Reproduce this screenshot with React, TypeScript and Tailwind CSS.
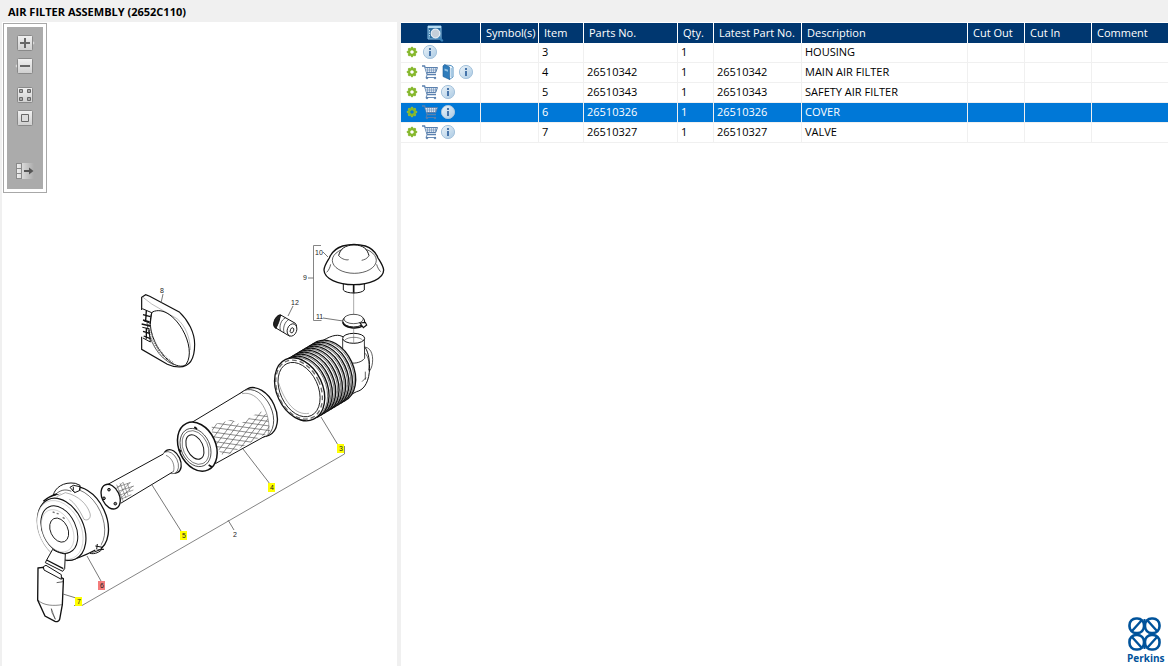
import { useState } from 'react';
import clsx from 'clsx';

interface Part {
  item: string;
  partNo: string;
  qty: string;
  latest: string;
  description: string;
  cart?: boolean;
  book?: boolean;
}

const PARTS: Part[] = [
  { item: '3', partNo: '', qty: '1', latest: '', description: 'HOUSING' },
  { item: '4', partNo: '26510342', qty: '1', latest: '26510342', description: 'MAIN AIR FILTER', cart: true, book: true },
  { item: '5', partNo: '26510343', qty: '1', latest: '26510343', description: 'SAFETY AIR FILTER', cart: true },
  { item: '6', partNo: '26510326', qty: '1', latest: '26510326', description: 'COVER', cart: true },
  { item: '7', partNo: '26510327', qty: '1', latest: '26510327', description: 'VALVE', cart: true },
];

const HOTSPOTS = [
  { item: '3', x: 337, y: 444 },
  { item: '4', x: 268, y: 483 },
  { item: '5', x: 180, y: 531 },
  { item: '6', x: 98, y: 581 },
  { item: '7', x: 75, y: 597 },
];

const LABELS = [
  { text: '2', x: 233, y: 537 },
  { text: '8', x: 160, y: 293 },
  { text: '9', x: 303, y: 280 },
  { text: '10', x: 315, y: 255 },
  { text: '11', x: 316, y: 319 },
  { text: '12', x: 291, y: 305 },
];

const RIBS = [9, 8, 7, 6, 5, 4, 3, 2, 1];
const TEETH = [0, 45, 90, 135, 180, 225, 270, 315];

/* ---------- Icons ---------- */

function GearIcon() {
  return (
    <svg width="12" height="12" viewBox="0 0 12 12" aria-hidden="true">
      <g fill="#8ebb3c">
        {TEETH.map((a) => (
          <rect key={a} x="4.8" y="0.8" width="2.4" height="3" rx="0.8" transform={`rotate(${a} 6 6)`} />
        ))}
      </g>
      <circle cx="6" cy="6" r="2.9" fill="none" stroke="#86b82c" strokeWidth="2.2" />
    </svg>
  );
}

function InfoIcon() {
  return (
    <svg width="16" height="16" viewBox="0 0 16 16" aria-hidden="true">
      <defs>
        <linearGradient id="infoFill" x1="0" y1="0" x2="1" y2="1">
          <stop offset="0" stopColor="#eef5fa" />
          <stop offset="1" stopColor="#a9c9e3" />
        </linearGradient>
      </defs>
      <circle cx="8" cy="8" r="6.6" fill="url(#infoFill)" stroke="#a5c3dc" />
      <path d="M7 4h2v2H7zM7 7h2v5H7z" fill="#4674aa" />
    </svg>
  );
}

function CartIcon() {
  return (
    <svg width="18" height="16" viewBox="0 0 18 16" fill="none" stroke="#5a80ae" aria-hidden="true">
      <path d="M1 2h2.6l2.600 8.500H15" strokeWidth="1.3" />
      <path d="M4.2 3.5h12.3l-1.8 5H5.6" fill="#dde6f0" />
      <path d="M6.5 3.5v5M8.5 3.5v5M10.5 3.5v5M12.5 3.5v5M14.5 3.5v5M5 6h10.5" strokeWidth="0.5" />
      <path d="M6 11l-1 2.500h10" strokeWidth="0.9" />
      <circle cx="6" cy="14" r="0.8" fill="#5a80ae" />
      <circle cx="14" cy="14" r="0.8" fill="#5a80ae" />
    </svg>
  );
}

function BookIcon() {
  return (
    <svg width="12" height="16" viewBox="0 0 12 16" aria-hidden="true">
      <path d="M3 1l6 .5 2 1.5v10l-3.500 2.500z" fill="#f2f8fc" stroke="#2f78b5" strokeWidth="0.8" />
      <path d="M1 2L2.5.5l5 2.5v12.500L1 12.500z" fill="#2f7cbb" stroke="#1c5d96" strokeWidth="0.6" />
      <path d="M2.5 4.5L6 5.8v2L2.5 6.5z" fill="#8fc0e4" />
      <path d="M9.2 4v9" stroke="#6aa5d2" strokeWidth="0.8" />
    </svg>
  );
}

function PreviewIcon() {
  return (
    <svg width="17" height="17" viewBox="0 0 17 17" aria-hidden="true">
      <path d="M1 1h13v13H1z" fill="#2c6d9f" stroke="#8fc4e6" />
      <path d="M1 1h13v2H1z" fill="#b5dbf2" />
      <path d="M2.5 5v8" stroke="#b5dbf2" strokeDasharray="1.5 1" />
      <path d="M11.5 12l3.500 3.500" stroke="#3d83b8" strokeWidth="2.4" strokeLinecap="round" />
      <circle cx="8.5" cy="8.5" r="4.3" fill="#c5cfd9" stroke="#e7eef5" strokeWidth="1.2" />
    </svg>
  );
}

type ToolKind = 'zoomIn' | 'zoomOut' | 'tiles' | 'fit' | 'export';

function ToolIcon({ kind }: { kind: ToolKind }) {
  return (
    <svg width="20" height="16" viewBox="0 0 20 16" aria-hidden="true">
      <defs>
        <linearGradient id="toolFill" x1="0" y1="0" x2="0" y2="1">
          <stop offset="0" stopColor="#f1f1f1" />
          <stop offset="1" stopColor="#cfcfcf" />
        </linearGradient>
        <linearGradient id="exportFill" x1="0" y1="0" x2="1" y2="0">
          <stop offset="0" stopColor="#f1f1f1" />
          <stop offset="1" stopColor="#ababab" />
        </linearGradient>
      </defs>
      {kind === 'zoomIn' && <path d="M17.5 5.5l2 2.5-2 2.5z" fill="#dedede" />}
      {kind === 'zoomOut' && <path d="M2.5 5.5L.5 8l2 2.5z" fill="#dedede" />}
      {kind !== 'export' && (
        <rect x="2.5" y="0.5" width="15" height="15" rx="1" fill="url(#toolFill)" stroke="#898989" />
      )}
      {kind === 'zoomIn' && <path d="M5 8h10M10 3v10" stroke="#686868" strokeWidth="2" />}
      {kind === 'zoomOut' && <path d="M5 8h10" stroke="#686868" strokeWidth="2" />}
      {kind === 'tiles' && (
        <path
          d="M4.5 2.5h3v3h-3zM12.5 2.5h3v3h-3zM4.5 10.5h3v3h-3zM12.5 10.5h3v3h-3z"
          fill="#aaaaaa"
          stroke="#686868"
        />
      )}
      {kind === 'fit' && <path d="M6.5 4.5h7v7h-7z" fill="#dcdcdc" stroke="#686868" />}
      {kind === 'export' && (
        <>
          <rect x="1" y="0" width="18" height="16" fill="url(#exportFill)" />
          <path d="M1.5 0v16M6.5 0v16M1 .5h5M1 5.5h5M1 10.5h5M1 15.5h5" stroke="#898989" />
          <path d="M9 8h6" stroke="#555555" strokeWidth="2" />
          <path d="M14 4.5L18.5 8 14 11.5z" fill="#555555" />
        </>
      )}
    </svg>
  );
}

function ToolButton({ kind, label }: { kind: ToolKind; label: string }) {
  return (
    <button type="button" aria-label={label} title={label} className="flex cursor-pointer justify-center">
      <ToolIcon kind={kind} />
    </button>
  );
}

function RowButton({ label, children }: { label: string; children: React.ReactNode }) {
  return (
    <button
      type="button"
      aria-label={label}
      title={label}
      className="flex h-[18px] w-[18px] cursor-pointer items-center justify-center"
    >
      {children}
    </button>
  );
}

function PerkinsLogo() {
  return (
    <svg width="40" height="50" viewBox="0 0 40 50" role="img" aria-label="Perkins">
      <g fill="none" stroke="#00539b" strokeWidth="2.6">
        <rect x="3.5" y="2.5" width="14.5" height="14.5" rx="6.5" />
        <rect x="19" y="2.5" width="14.5" height="14.5" rx="6.5" />
        <rect x="3.5" y="19" width="14.5" height="14.5" rx="6.5" />
        <rect x="19" y="19" width="14.5" height="14.5" rx="6.5" />
        <path d="M6 15L15.5 4.5M31 15L21.5 4.5M6 21L15.5 31.5M31 21L21.5 31.5" strokeWidth="2.4" />
        <path d="M18.5 3v5M18.5 28v5" strokeWidth="2" />
      </g>
      <text x="1" y="46" fill="#00539b" fontSize="10" fontWeight="700" fontFamily="Open Sans, sans-serif">
        Perkins
      </text>
    </svg>
  );
}

/* ---------- Exploded view ---------- */

function Housing() {
  return (
    <g transform="translate(260 235) scale(0.3333)" fill="white" stroke="#111111" strokeWidth="3">
      {/* Rear body and outlet */}
      <path d="M300 340c24-12 38 8 38 34s-12 44-24 40" strokeWidth="2" />
      <path d="M180 322c28-18 50-26 66-18l70 34c10 16 14 40 12 74-4 36-20 54-38 58l-40 20z" />
      <path d="M316 410v24M306 440l12-12M308 350c16 8 22 30 18 56" strokeWidth="2" fill="none" />
      <path d="M248 312v46c10 24 48 34 66 12l-1-58z" stroke="none" />
      <path d="M248 312v46l22 26c18 2 34-2 44-14l-1-58" strokeWidth="2.5" fill="none" />
      <ellipse cx="281" cy="310" rx="33" ry="15" />
      <path d="M254 316c10-12 46-12 54 0" strokeWidth="1.5" fill="none" />
      {/* Ribs, from the back to the front */}
      {RIBS.map((n) => (
        <g key={n}>
          <ellipse cx={122 + n * 10} cy={463 - n * 6} rx="69" ry="98" transform={`rotate(-25 ${122 + n * 10} ${463 - n * 6})`} strokeWidth="4" />
          <ellipse cx={118 + n * 10} cy={465 - n * 6} rx="69" ry="97" transform={`rotate(-25 ${118 + n * 10} ${465 - n * 6})`} strokeWidth="1.5" />
        </g>
      ))}
      <g transform="rotate(-25 119 463)">
        <ellipse cx="119" cy="463" rx="69" ry="99" strokeWidth="4" />
        <ellipse cx="117" cy="463" rx="64" ry="93" strokeWidth="4" strokeDasharray="14 9" stroke="#666666" />
        <ellipse cx="117" cy="463" rx="57" ry="86" strokeWidth="2.5" />
        <path d="M70 418c-8 60 4 112 44 122" fill="none" strokeWidth="1.5" stroke="#777777" />
      </g>
    </g>
  );
}

function RainCap() {
  return (
    <g transform="translate(260 235) scale(0.3333)" fill="white" stroke="#111111" strokeWidth="3">
      <path d="M250 140v25c8 12 54 12 63 0v-25z" />
      <path d="M281 145v30" strokeWidth="5" />
      <path
        d="M192 105c1-14 10-26 16-36 6-16 22-30 40-36 20-6 48-6 68 0 18 6 32 20 38 36 6 10 16 24 17 36 0 26-42 44-90 44s-88-18-89-44z"
        strokeWidth="4"
      />
      <path d="M200 112c6-6 10-14 12-24M362 110c-6-6-10-14-12-22" fill="none" strokeWidth="2" />
      <ellipse cx="283" cy="76" rx="66" ry="39" strokeWidth="2" />
      <path d="M236 62c4-20 20-32 46-32 28 0 40 12 45 32" strokeWidth="3" />
      <path d="M236 62c10 12 26 14 30 12m61-12c-6 10-14 12-22 14" fill="none" strokeWidth="2" />
      {/* Clamp */}
      <ellipse cx="281" cy="258" rx="33" ry="18" strokeWidth="3" />
      <ellipse cx="281" cy="252" rx="29" ry="14" strokeWidth="2" />
      <path d="M248 262c6 18 44 22 62 10" fill="none" strokeWidth="5" />
      <path d="M300 264l16-2 4 8-10 8z" strokeWidth="3.5" />
      <path d="M281 172v68M281 276v49" stroke="#555555" strokeWidth="1.5" />
      {/* Vacuator plug */}
      <path d="M62 240l44 25c10 10-2 36-18 38l-42-25c-10-10 2-38 16-38z" />
      <path d="M62 240c-16-2-30 34-14 40l8-18z" fill="#222222" />
      <path d="M76 249c-12 4-20 26-14 38M86 254c-12 6-18 26-14 38" fill="none" strokeWidth="2" />
      <ellipse cx="96" cy="285" rx="14" ry="19" transform="rotate(20 96 285)" strokeWidth="2.5" />
      <ellipse cx="96" cy="286" rx="5" ry="8" transform="rotate(20 96 286)" strokeWidth="2.5" />
    </g>
  );
}

function StrapBand() {
  return (
    <g transform="translate(125 280) scale(0.3333)" fill="none" stroke="#111111" strokeWidth="3.5">
      <path d="M50 90V52l12-8 12 5 90 48c26 24 45 62 45 96 0 46-14 68-46 68-14 0-26-3-36-8L50 208v-38" />
      <path d="M54 52l26 20 76 44c26 22 40 60 40 94" strokeWidth="1.5" stroke="#777777" />
      {/* Inner opening and its hatched lining */}
      <path
        d="M82 96c34-16 70 18 90 52 22 38 28 80 12 104-8 10-26 8-42-2-36-24-64-74-66-116 0-14 0-30 6-38z"
        strokeWidth="3"
      />
      <path d="M66 128c4 52 34 108 80 126" strokeWidth="2" />
      <path d="M72 132c4 46 34 98 74 118" strokeWidth="9" strokeDasharray="2 4" stroke="#777777" />
      <path d="M52 86l28 12-4 32-20-8M52 142l20 4 4 40-22-12" strokeWidth="3" />
      <path d="M54 104l22 6M54 120l20 6M64 92l-2 30M54 154l20 6M56 168l20 8M64 144v32M50 132l26 6" strokeWidth="4" />
    </g>
  );
}

function MainFilter() {
  return (
    <g transform="translate(160 375) scale(0.3333)" fill="white" stroke="#111111" strokeWidth="3">
      <defs>
        <clipPath id="meshClip">
          <path d="M155 150l60-16 24 14 62-40 20 12 10 50-140 76-34-46z" />
        </clipPath>
      </defs>
      <ellipse cx="295" cy="111" rx="52" ry="77" transform="rotate(-25 295 111)" strokeWidth="4" />
      <ellipse cx="284" cy="116" rx="52" ry="76" transform="rotate(-25 284 116)" strokeWidth="2" />
      <path d="M250 50L96 142l72 124 148-83z" stroke="none" />
      <path d="M246 56c50-12 92 66 78 123" strokeWidth="2" stroke="#777777" fill="none" />
      <path d="M250 49L96 142M166 266l150-83" />
      <g clipPath="url(#meshClip)" stroke="#555555" strokeWidth="2">
        <path d="M155 168l50-70M155 196l70-98M160 220l88-118M168 236l100-134M180 246l108-144M200 248l110-146M220 248l104-140M242 244l96-132M266 240l74-102M290 236l60-84" />
        <path d="M150 128l200 28M150 142l200 28M150 156l200 28M150 170l200 28M150 184l200 28M150 198l200 28M150 212l200 28M150 226l200 28M200 108l160 22M200 122l160 22" />
      </g>
      <g transform="rotate(-25 112 215)">
        <ellipse cx="112" cy="215" rx="55" ry="77" strokeWidth="4.5" />
        <ellipse cx="106" cy="215" rx="43" ry="60" strokeWidth="2" />
        <ellipse cx="106" cy="215" rx="37" ry="53" strokeWidth="1.5" />
        <ellipse cx="105" cy="213" rx="24" ry="39" />
      </g>
      <path d="M103 156l8 6M146 270l10 6M57 224l6 6" strokeWidth="5" />
    </g>
  );
}

function SafetyFilter() {
  return (
    <g transform="translate(20 440) scale(0.3333)" fill="white" stroke="#111111" strokeWidth="3">
      <ellipse cx="457" cy="64" rx="24" ry="37" transform="rotate(-25 457 64)" strokeWidth="4" />
      <ellipse cx="450" cy="68" rx="23" ry="35" transform="rotate(-25 450 68)" strokeWidth="1.5" />
      <path d="M430 42L262 134l40 56 156-94c6-22-8-50-28-54z" stroke="none" />
      <path d="M430 42L262 134M302 190l156-94" />
      <path d="M438 46c20 8 28 32 22 50" fill="none" strokeWidth="1.5" />
      <path
        d="M290 134l20 50M300 130l18 44M310 128l14 38M322 130l8 24M290 142l40-14M294 154l48-16M298 166l42-16M302 178l32-14M286 150l24-24M294 164l38-38M300 178l38-40"
        strokeWidth="1.5"
        stroke="#444444"
      />
      <ellipse cx="272" cy="170" rx="26" ry="39" transform="rotate(-25 272 170)" strokeWidth="4" />
      <g fill="#888888" strokeWidth="3">
        <circle cx="267" cy="149" r="4" />
        <circle cx="252" cy="175" r="4" />
        <circle cx="286" cy="191" r="4" />
      </g>
    </g>
  );
}

function Cover() {
  return (
    <g transform="translate(20 440) scale(0.3333)" fill="white" stroke="#111111" strokeWidth="3">
      {/* Valve */}
      <path d="M54 384l14-2 62 34v10l-3 68-8 44c-2 6-8 8-14 6l-30-16-22-48z" strokeWidth="4" />
      <path d="M70 380l8-4 46 28v14l-52-28z" />
      <path d="M110 428l20-3" strokeWidth="2" />
      <path d="M54 480c16 18 50 18 72 14M94 506l12 32-10-20z" strokeWidth="1.5" fill="none" />
      {/* Back rim */}
      <ellipse cx="190" cy="238" rx="68" ry="103" transform="rotate(-25 190 238)" strokeWidth="4" />
      <ellipse cx="180" cy="242" rx="67" ry="101" transform="rotate(-25 180 242)" strokeWidth="1.5" />
      <path d="M100 166c4-22 30-42 66-36l14 6v14l-30 8z" />
      <path d="M84 179l52-26c60-18 110 74 106 174l-76 30z" stroke="none" />
      <path d="M70 184c14-12 26-18 40-22M140 362c28-4 60-18 86-32" fill="none" strokeWidth="4" />
      <path d="M106 164c14-14 30-18 48-10" fill="none" strokeWidth="2" />
      <path
        d="M110 170l26-12c40 8 66 36 74 62 4 14-6 24-18 18M148 178c16 10 32 34 44 60"
        fill="none"
        strokeWidth="1.5"
        stroke="#666666"
      />
      <ellipse cx="125" cy="268" rx="66" ry="98" transform="rotate(-25 125 268)" strokeWidth="3.5" />
      <ellipse cx="120" cy="270" rx="63" ry="93" transform="rotate(-25 120 270)" strokeWidth="1" stroke="#888888" />
      <g transform="rotate(-25 118 269)">
        <ellipse cx="118" cy="269" rx="50" ry="75" />
        <ellipse cx="112" cy="270" rx="44" ry="67" strokeWidth="1" stroke="#888888" />
        <ellipse cx="117" cy="270" rx="26" ry="38" strokeWidth="2.5" />
      </g>
      <path d="M98 216l6 2M110 220l6 2M128 232l6 4" strokeWidth="4" stroke="#777777" />
      {/* Latches */}
      <path d="M150 142l10-6 20 4-2 12-14 6z" />
      <path d="M156 150l8 6M160 140v10M226 318l22 4M232 330l20-2M232 312l-2 16" strokeWidth="3" />
      <path d="M210 340c14 4 30-4 38-14" fill="none" />
      {/* Spout */}
      <path d="M98 328L80 360l-4 8 52 26 6-8 2-44c-16-2-30-8-38-14z" />
      <path d="M80 360l50 26" strokeWidth="4" />
    </g>
  );
}

interface SelectionProps {
  selected: string;
  onSelect: (item: string) => void;
}

function Drawing({ selected, onSelect }: SelectionProps) {
  return (
    <svg width="395" height="644" viewBox="2 22 395 644" role="img" aria-label="Air filter assembly exploded view">
      <Housing />
      <RainCap />
      <StrapBand />
      <MainFilter />
      <SafetyFilter />
      <Cover />

      {/* Leader lines */}
      <path
        d="M321 417l17 28M243 449l27 35M152 485l29 46M87 556l14 25M63 594l13 4M163 294l-2 9M293 306l-5 10M323 252l5 5M308 278h6M323 318l20 3M228 520l6 10"
        fill="none"
        stroke="#555555"
        strokeWidth="0.8"
      />
      <path d="M321 245.5h-7.5v75h8M344.5 446v8L82 605.5h-8" fill="none" stroke="#777777" strokeWidth="0.9" />

      <g fontSize="7" fontFamily="Liberation Sans, sans-serif" fill="#222222">
        {LABELS.map((l) => (
          <text key={l.text} x={l.x} y={l.y}>
            {l.text}
          </text>
        ))}
        {HOTSPOTS.map((h) => (
          <g key={h.item} className="cursor-pointer" onClick={() => onSelect(h.item)}>
            <rect x={h.x} y={h.y} width="7" height="9" fill={h.item === selected ? '#f47c7c' : '#ffff00'} />
            <text x={h.x + 2} y={h.y + 7}>
              {h.item}
            </text>
          </g>
        ))}
      </g>
    </svg>
  );
}

/* ---------- Parts table ---------- */

const COLUMNS = ['Symbol(s)', 'Item', 'Parts No.', 'Qty.', 'Latest Part No.', 'Description', 'Cut Out', 'Cut In', 'Comment'];

function PartsTable({ selected, onSelect }: SelectionProps) {
  return (
    <table className="w-full table-fixed border-separate border-spacing-0 text-left">
      <colgroup>
        <col className="w-[80px]" />
        <col className="w-[58px]" />
        <col className="w-[45px]" />
        <col className="w-[94px]" />
        <col className="w-[36px]" />
        <col className="w-[88px]" />
        <col className="w-[166px]" />
        <col className="w-[57px]" />
        <col className="w-[67px]" />
        <col />
      </colgroup>
      <thead>
        <tr className="h-5 bg-[#003770] text-white">
          <th className="border-r border-white p-0 pl-[26px]">
            <PreviewIcon />
          </th>
          {COLUMNS.map((name) => (
            <th key={name} className="border-r border-white p-0 pl-[5px] font-normal whitespace-nowrap last:border-r-0">
              {name}
            </th>
          ))}
        </tr>
      </thead>
      <tbody>
        {PARTS.map((part) => {
          const active = part.item === selected;
          const cells = [part.item, part.partNo, part.qty, part.latest, part.description, '', '', ''];
          return (
            <tr
              key={part.item}
              onClick={() => onSelect(part.item)}
              className={clsx(
                'h-5 cursor-default align-top leading-[18px]',
                active ? 'bg-[#0078d7] text-white' : 'bg-white text-black'
              )}
            >
              <td className="border-r border-b border-[#f0f0f0] p-0 pl-[2px]">
                <div className="flex">
                  <RowButton label="Options">
                    <GearIcon />
                  </RowButton>
                  {part.cart && (
                    <RowButton label="Add to cart">
                      <CartIcon />
                    </RowButton>
                  )}
                  {part.book && (
                    <RowButton label="Service book">
                      <BookIcon />
                    </RowButton>
                  )}
                  <RowButton label="Information">
                    <InfoIcon />
                  </RowButton>
                </div>
              </td>
              <td className="border-r border-b border-[#f0f0f0] p-0" />
              {cells.map((value, i) => (
                <td key={i} className="border-r border-b border-[#f0f0f0] p-0 pl-[3px] whitespace-nowrap last:border-r-0">
                  {value}
                </td>
              ))}
            </tr>
          );
        })}
      </tbody>
    </table>
  );
}

export default function App() {
  const [selected, setSelected] = useState('6');

  return (
    <div className="flex min-h-screen flex-col bg-[#f0f0f0] font-['Open_Sans',sans-serif] text-[11px] leading-4 text-black">
      <header className="flex h-[22px] items-center px-2 pt-[2px]">
        <h1 className="font-bold">AIR FILTER ASSEMBLY (2652C110)</h1>
      </header>

      <main className="flex grow">
        <section className="relative ml-[2px] w-[395px] shrink-0 bg-white">
          <Drawing selected={selected} onSelect={setSelected} />

          {/* Toolbar floating over the drawing */}
          <div className="absolute top-px left-px border border-[#a8a8a8] bg-white p-[3px]">
            <div className="flex w-9 flex-col gap-[7px] bg-[#ababab] pt-2 pb-[10px]">
              <ToolButton kind="zoomIn" label="Zoom in" />
              <ToolButton kind="zoomOut" label="Zoom out" />
              <div className="mt-[6px] mb-[30px] flex flex-col gap-[7px]">
                <ToolButton kind="tiles" label="Show all" />
                <ToolButton kind="fit" label="Fit to window" />
              </div>
              <ToolButton kind="export" label="Hide panel" />
            </div>
          </div>
        </section>

        <section className="ml-1 flex grow flex-col justify-between bg-white pt-px">
          <PartsTable selected={selected} onSelect={setSelected} />
          <footer className="flex justify-end pr-[2px]">
            <PerkinsLogo />
          </footer>
        </section>
      </main>
    </div>
  );
}
